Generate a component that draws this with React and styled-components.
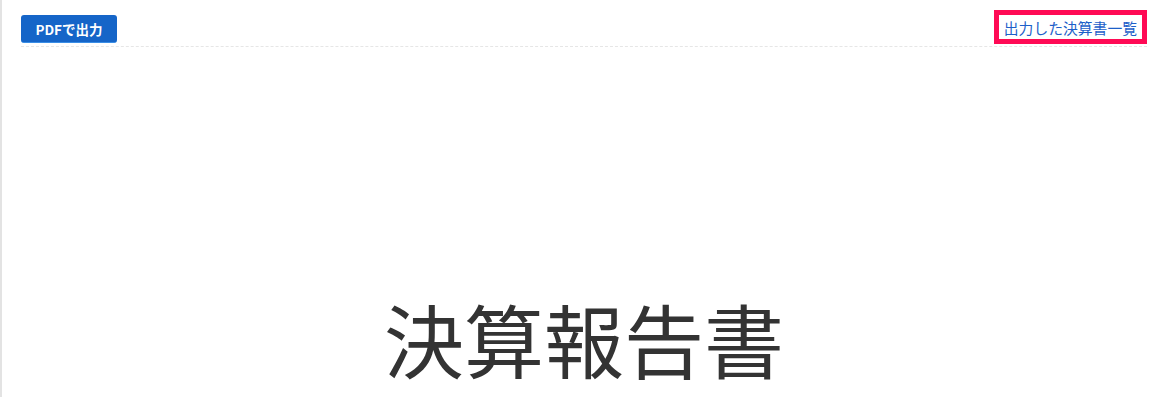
import React from 'react'
import styled, { createGlobalStyle } from 'styled-components'

const GlobalStyle = createGlobalStyle`
  html, body {
    margin: 0;
    padding: 0;
    background: #ffffff;
  }
  body {
    font-family: "Noto Sans CJK JP", "Noto Sans", sans-serif;
  }
`

const Page = styled.div`
  min-height: 397px;
  box-sizing: border-box;
  border-left: 2px solid #e3e3e3;
  padding: 0 20px 0 19px;
`

const Toolbar = styled.div`
  display: flex;
  justify-content: space-between;
  align-items: flex-start;
  height: 47px;
  box-sizing: border-box;
  padding-top: 10px;
  border-bottom: 1px dashed #e6e6e6;
`

const PdfButton = styled.button`
  margin-top: 5px;
  width: 96px;
  height: 28px;
  border: none;
  border-bottom: 1px solid #3a8ee6;
  border-radius: 3px;
  background: #1565c8;
  color: #ffffff;
  font-family: "Noto Sans CJK JP", sans-serif;
  font-weight: 700;
  font-size: 13.5px;
  cursor: pointer;
`

const ListLink = styled.a`
  display: flex;
  align-items: center;
  height: 34px;
  box-sizing: border-box;
  padding: 0 5px 0 5px;
  border: 5px solid #ff0a55;
  color: #1d5fc9;
  font-size: 14.8px;
  text-decoration: none;
  white-space: nowrap;
`

const Title = styled.h1`
  margin: 250px 0 0;
  text-align: center;
  font-family: "Noto Sans CJK JP", sans-serif;
  font-weight: 400;
  font-size: 80px;
  line-height: 1;
  color: #333333;
`

export default function App() {
  return (
    <>
      <GlobalStyle />
      <Page>
        <Toolbar>
          <PdfButton>PDFで出力</PdfButton>
          <ListLink href="#">出力した決算書一覧</ListLink>
        </Toolbar>
        <Title>決算報告書</Title>
      </Page>
    </>
  )
}
